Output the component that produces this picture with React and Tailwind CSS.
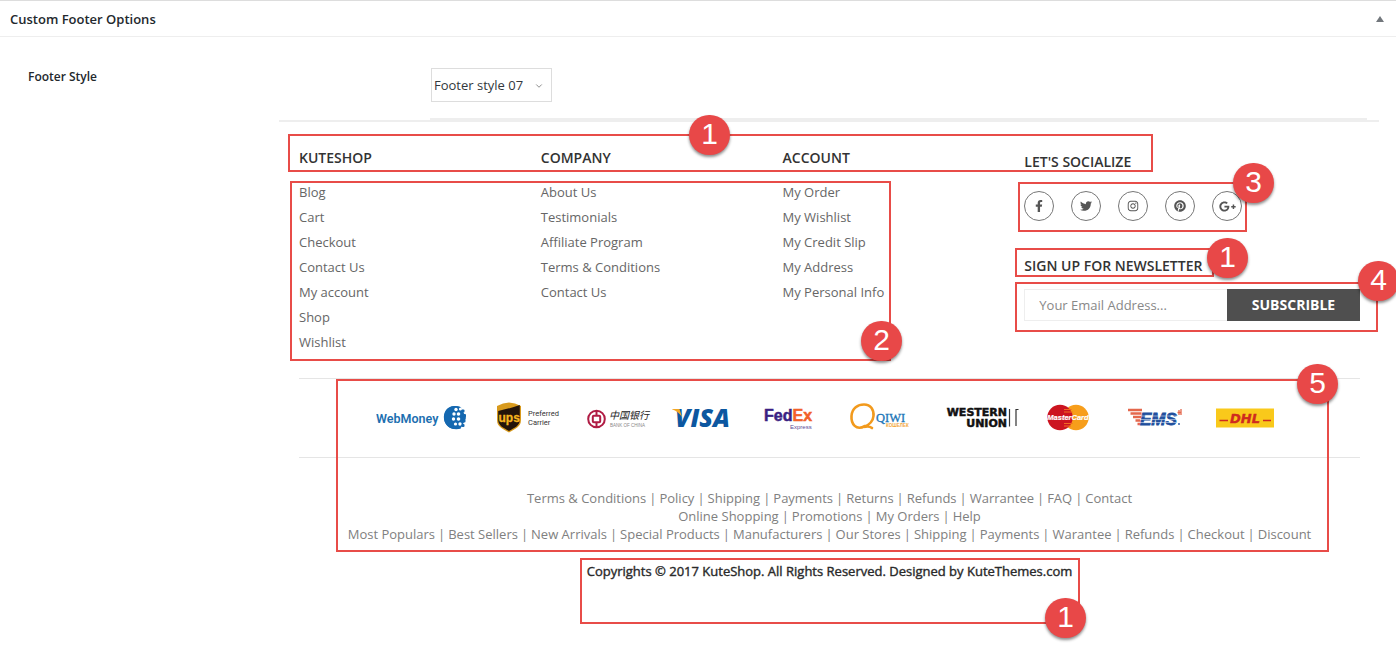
import React from "react";
import { FaFacebookF, FaTwitter, FaInstagram, FaPinterest, FaGooglePlusG } from "react-icons/fa";
import { ChevronDown } from "lucide-react";

const columns = [
  { title: "KUTESHOP", links: ["Blog", "Cart", "Checkout", "Contact Us", "My account", "Shop", "Wishlist"] },
  { title: "COMPANY", links: ["About Us", "Testimonials", "Affiliate Program", "Terms & Conditions", "Contact Us"] },
  { title: "ACCOUNT", links: ["My Order", "My Wishlist", "My Credit Slip", "My Address", "My Personal Info"] },
];

const linkRows = [
  ["Terms & Conditions", "Policy", "Shipping", "Payments", "Returns", "Refunds", "Warrantee", "FAQ", "Contact"],
  ["Online Shopping", "Promotions", "My Orders", "Help"],
  ["Most Populars", "Best Sellers", "New Arrivals", "Special Products", "Manufacturers", "Our Stores", "Shipping", "Payments", "Warantee", "Refunds", "Checkout", "Discount"],
];

const socials = [
  { name: "Facebook", Icon: FaFacebookF },
  { name: "Twitter", Icon: FaTwitter },
  { name: "Instagram", Icon: FaInstagram },
  { name: "Pinterest", Icon: FaPinterest },
  { name: "Google Plus", Icon: FaGooglePlusG },
];

const sans = "Liberation Sans, Arial, sans-serif";

function WebMoney() {
  return (
    <svg width="101" height="36" viewBox="0 0 101 36" aria-label="WebMoney">
      <text x="0" y="22.500" fontFamily="Roboto, sans-serif" fontSize="12.500" fontWeight="600" fill="#1c6fb0">WebMoney</text>
      <path d="M84 7C72 3 67 12 68 19C69 27 77 31 85 28.500C81 23 80 13 84 7Z" fill="#1568b0" />
      <circle cx="79.500" cy="17.500" r="11.500" fill="#1568b0" />
      <path d="M85 7L92 4V31L85 28L90 18Z" fill="#fff" />
      <g fill="#fff">
        <circle cx="80" cy="9.500" r="1.700" /><circle cx="84.500" cy="9" r="1.600" />
        <circle cx="78" cy="14" r="1.700" /><circle cx="82.500" cy="14" r="1.800" />
        <circle cx="77.500" cy="19" r="1.700" /><circle cx="82.500" cy="19" r="1.800" />
        <circle cx="79.500" cy="24" r="1.600" /><circle cx="84" cy="24" r="1.700" />
      </g>
      <g fill="#1568b0">
        <rect x="85.500" y="9.500" width="3" height="3" rx="1" /><rect x="86.500" y="14" width="3.500" height="3.500" rx="1" />
        <rect x="86" y="19" width="3.500" height="3.500" rx="1" /><rect x="85.500" y="24" width="3" height="3" rx="1" />
      </g>
    </svg>
  );
}

function Ups() {
  return (
    <svg width="70" height="36" viewBox="0 0 70 36" aria-label="UPS Preferred Carrier">
      <path d="M0 6Q12-1 24 6V20C24 27 18 29 12 32.500C6 29 0 27 0 20Z" fill="#d89a1d" />
      <path d="M1.200 11Q11 9 22.800 5V20C22.800 26 17 28 12 31C7 28 1.200 26 1.200 20Z" fill="#24140a" />
      <text x="1.500" y="22" fontFamily={sans} fontSize="12" fontWeight="700" fill="#f6b51e" stroke="#f6b51e" strokeWidth=".3">ups</text>
      <text x="31" y="16" fontFamily="Roboto, sans-serif" fontSize="7.500" fill="#333">Preferred</text>
      <text x="31" y="25" fontFamily="Roboto, sans-serif" fontSize="7.500" fill="#333">Carrier</text>
    </svg>
  );
}

function BankOfChina() {
  return (
    <svg width="65" height="36" viewBox="0 0 65 36" aria-label="Bank of China">
      <circle cx="9.500" cy="19" r="8.300" fill="none" stroke="#b01c44" strokeWidth="2" />
      <path d="M9.500 11v5M9.500 22v5" stroke="#b01c44" strokeWidth="2" />
      <rect x="5.800" y="15.800" width="7.400" height="6.400" rx="1" fill="none" stroke="#b01c44" strokeWidth="2" />
      <text x="22" y="19" fontFamily="Noto Sans CJK SC, sans-serif" fontSize="10" fontStyle="italic" fill="#222">中国银行</text>
      <text x="23" y="27" fontFamily={sans} fontSize="4.500" fill="#888">BANK OF CHINA</text>
    </svg>
  );
}

function Visa() {
  return (
    <svg width="68" height="36" viewBox="0 0 68 36" aria-label="VISA">
      <text x="3" y="27" fontFamily="Open Sans, sans-serif" fontSize="25" fontWeight="800" fontStyle="italic" fill="#0c57a0">VISA</text>
      <path d="M-1 9H7.500L10 17Q6 11-1 9Z" fill="#f2a623" />
    </svg>
  );
}

function FedEx() {
  return (
    <svg width="66" height="36" viewBox="0 0 66 36" aria-label="FedEx Express">
      <text x="4" y="21" fontFamily={sans} fontSize="16" fontWeight="700" fill="#3b1f83" stroke="#3b1f83" strokeWidth=".5">
        Fed<tspan fill="#f2612a" stroke="#f2612a">Ex</tspan>
      </text>
      <text x="30" y="28.500" fontFamily={sans} fontSize="6" fill="#5c4a98">Express</text>
    </svg>
  );
}

function Qiwi() {
  return (
    <svg width="70" height="36" viewBox="0 0 70 36" aria-label="QIWI">
      <path d="M19 26C10 31 5 24 5.500 16C6 8 12 4.500 18 4.500C25 4.500 28 10 27.500 16C27 21 23 25 18 27Q23 25.500 26 28" fill="none" stroke="#f29a1d" strokeWidth="2.600" strokeLinecap="round" />
      <text x="30" y="22" fontFamily="Liberation Serif, serif" fontSize="12.500" fill="#2176b8" stroke="#2176b8" strokeWidth=".3">QIWI</text>
      <text x="40" y="27" fontFamily={sans} fontSize="4.500" fontWeight="700" fill="#f2a73a">КОШЕЛЕК</text>
    </svg>
  );
}

function WesternUnion() {
  return (
    <svg width="86" height="36" viewBox="0 0 86 36" aria-label="Western Union">
      <g fontFamily="DejaVu Sans, sans-serif" fontSize="11" fontWeight="700" fill="#111" stroke="#111" strokeWidth=".5" textAnchor="end">
        <text x="71" y="16">WESTERN</text>
        <text x="71" y="27">UNION</text>
      </g>
      <path d="M73.500 9V26.500M80 26V9.500H82.500" fill="none" stroke="#333" strokeWidth="1.200" />
    </svg>
  );
}

function MasterCard() {
  return (
    <svg width="56" height="36" viewBox="0 0 56 36" aria-label="MasterCard">
      <circle cx="34" cy="17.500" r="12.700" fill="#f79e1b" />
      <circle cx="18" cy="17.500" r="12.700" fill="#cc1420" />
      <path d="M22 9.500H29.500M22 12H30.500M22 23.500H30.500M22 26H29" stroke="#f26a22" strokeWidth="1.200" />
      <text x="26" y="20" textAnchor="middle" fontFamily={sans} fontSize="7.500" fontWeight="700" fontStyle="italic" fill="#fff" stroke="#fff" strokeWidth=".2">MasterCard</text>
    </svg>
  );
}

function Ems() {
  return (
    <svg width="72" height="36" viewBox="0 0 72 36" aria-label="EMS">
      <path d="M10 10H24M12.500 13.500H23.500M15 17H23M17.500 20.500H22.500M19.500 24H22" stroke="#e4674c" strokeWidth="2.300" />
      <text x="22" y="25" fontFamily={sans} fontSize="17" fontWeight="700" fontStyle="italic" fill="#214f9d" stroke="#214f9d" strokeWidth=".8">EMS</text>
      <path d="M24 16H60M22 19.500H59M22 22.500H58" stroke="#fff" strokeWidth=".5" />
      <path d="M59.500 12.500H63.500M61 10v5M63 9v6" stroke="#e4674c" strokeWidth="1.300" />
      <circle cx="61" cy="24" r=".9" fill="#214f9d" />
    </svg>
  );
}

function Dhl() {
  return (
    <svg width="73" height="36" viewBox="0 0 73 36" aria-label="DHL">
      <rect x="6" y="8.500" width="58" height="19" fill="#f9c91b" />
      <text x="35" y="22.500" textAnchor="middle" fontFamily="DejaVu Sans, sans-serif" fontSize="13" fontWeight="700" fontStyle="italic" fill="#cf2a1f" stroke="#cf2a1f" strokeWidth=".4">DHL</text>
      <path d="M9.500 20.500H18M53 20.500H61" stroke="#cf2a1f" strokeWidth="1.600" />
    </svg>
  );
}

const payments = [WebMoney, Ups, BankOfChina, Visa, FedEx, Qiwi, WesternUnion, MasterCard, Ems, Dhl];

const callouts = [
  { n: 1, box: "left-[9px] top-3 h-[38px] w-[865px]", badge: "left-[399px] -top-[21px]" },
  { n: 2, box: "left-[11px] top-[59px] h-[180px] w-[601px]", badge: "-right-[13px] -bottom-[2px]" },
  { n: 3, box: "left-[739px] top-[60px] h-[50px] w-[229px]", badge: "-right-[29px] -top-[21px]" },
  { n: 1, box: "left-[736px] top-[126px] h-[29px] w-[199px]", badge: "-right-[36px] -top-[12px]" },
  { n: 4, box: "left-[736px] top-[160px] h-[50px] w-[363px]", badge: "-right-[23px] -top-[23px]" },
  { n: 5, box: "left-[57px] top-[257px] h-[173px] w-[993px]", badge: "-right-[11px] -top-[17px]" },
  { n: 1, box: "left-[301px] top-[436px] h-[66px] w-[500px]", badge: "-right-[8px] -bottom-[16px]" },
];

function Callout({ n, box, badge }) {
  return (
    <div className={`pointer-events-none absolute border-2 border-[#e84c48] ${box}`}>
      <span className={`absolute flex h-10 w-[41px] items-center justify-center rounded-full bg-[#e84848] pb-0.5 font-['Liberation_Sans',Arial,sans-serif] text-[30px] leading-8 text-white shadow-[0_2px_3px_rgba(0,0,0,0.45)] ${badge}`}>
        {n}
      </span>
    </div>
  );
}

function Heading({ children }) {
  return <h3 className="text-sm leading-5 font-semibold text-[#333]">{children}</h3>;
}

function FooterPreview() {
  return (
    <footer className="relative ml-[279px] mr-[17px] border-t-2 border-[#eee] pr-[19px] pl-5 font-['Open_Sans',sans-serif] text-[13px] text-[#666]">
      <div className="grid grid-cols-[242fr_242fr_242fr_336fr] border-b border-[#e5e5e5] pt-[26px] pb-[23px]">
        {columns.map((c) => (
          <nav key={c.title} aria-label={c.title}>
            <Heading>{c.title}</Heading>
            <ul className="mt-3">
              {c.links.map((l) => (
                <li key={l} className="leading-[25px]"><a href="#">{l}</a></li>
              ))}
            </ul>
          </nav>
        ))}
        <div className="min-w-0 pt-1">
          <Heading>LET'S SOCIALIZE</Heading>
          <div className="mt-[19px] flex gap-[17px]">
            {socials.map(({ name, Icon }) => (
              <a key={name} href="#" aria-label={name} className="flex size-[30px] items-center justify-center rounded-full border border-[#777] text-[#555]">
                <Icon size={name === "Google Plus" ? 17 : 12} />
              </a>
            ))}
          </div>
          <div className="mt-[35px]"><Heading>SIGN UP FOR NEWSLETTER</Heading></div>
          <form className="mt-[13px] flex" onSubmit={(e) => e.preventDefault()}>
            <input type="email" aria-label="Your Email Address" placeholder="Your Email Address..." className="h-8 min-w-0 flex-1 border border-r-0 border-[#eee] px-[14px] placeholder:text-[#888]" />
            <button type="submit" className="h-8 w-[133px] bg-[#4f4f4f] text-sm font-bold text-white">SUBSCRIBLE</button>
          </form>
        </div>
      </div>
      <div className="flex justify-center gap-5 border-b border-[#e5e5e5] py-[21px]">
        {payments.map((Logo) => <Logo key={Logo.name} />)}
      </div>
      <div className="mt-[31px] flex flex-col items-center leading-[18px] text-[#808080]">
        {linkRows.map((row) => (
          <ul key={row[0]} className="flex whitespace-nowrap">
            {row.map((l, i) => (
              <li key={l} className="flex">
                {i > 0 && <span className="px-[3px]">|</span>}
                <a href="#">{l}</a>
              </li>
            ))}
          </ul>
        ))}
      </div>
      <p className="mt-[18px] text-center leading-5 text-[#222] [-webkit-text-stroke:0.4px_#333]">
        Copyrights © 2017 KuteShop. All Rights Reserved. Designed by KuteThemes.com
      </p>
      {callouts.map((c, i) => <Callout key={i} {...c} />)}
    </footer>
  );
}

export default function App() {
  return (
    <main className="overflow-x-hidden bg-white pb-20 font-['Open_Sans',sans-serif] text-[#23282d]">
      <header className="flex h-[37px] items-center justify-between border-t border-b border-t-[#ddd] border-b-[#eee] px-[10px]">
        <h2 className="pt-0.5 text-[13px] font-semibold">Custom Footer Options</h2>
        <button type="button" aria-label="Toggle panel" className="text-[#72777c]">
          <svg width="12" height="8" viewBox="0 0 12 8"><path d="M6 1L10 7H2Z" fill="currentColor" /></svg>
        </button>
      </header>
      <div className="mr-[29px] flex pl-7 pt-[31px]">
        <label htmlFor="footer-style" className="w-[402px] text-xs leading-[18px] font-semibold">Footer Style</label>
        <div className="flex-1 border-b-2 border-[#eee] pb-4">
          <div className="relative w-[122px]">
            <select id="footer-style" className="ml-px h-[34px] w-[121px] appearance-none border border-[#ddd] bg-white pt-0.5 pl-0.5 text-[13px] text-[#32373c]">
              <option>Footer style 07</option>
            </select>
            <ChevronDown size={10} className="pointer-events-none absolute right-2 top-[13px] text-[#777]" />
          </div>
        </div>
      </div>
      <FooterPreview />
    </main>
  );
}
